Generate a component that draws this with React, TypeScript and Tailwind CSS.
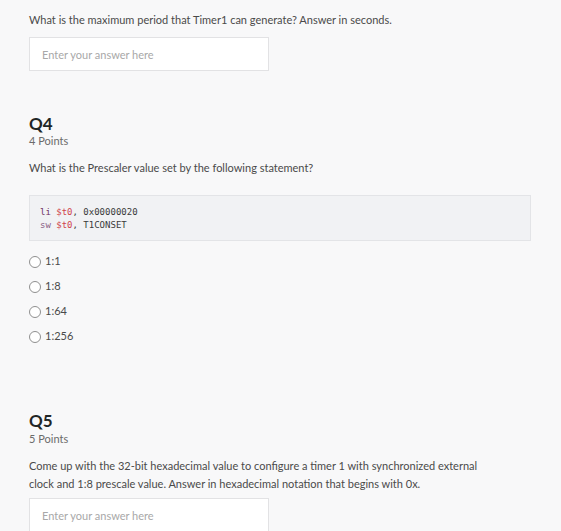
const font = { fontFamily: 'Lato, "Liberation Sans", sans-serif' }

function AnswerInput() {
  return (
    <input
      type="text"
      placeholder="Enter your answer here"
      className="block w-[240px] h-[34px] bg-white border border-[#e2e2e4] px-[12px] text-[11px] text-[#333] placeholder:text-[#a8a8a8] outline-none"
    />
  )
}

function Radio({ label }: { label: string }) {
  return (
    <label className="flex items-center h-[25px] gap-[4px] text-[11px] text-[#4a4a4a]">
      <span className="w-[12px] h-[12px] rounded-full border-[1.5px] border-[#8f8f8f] bg-white" />
      <span>{label}</span>
    </label>
  )
}

export default function App() {
  return (
    <div className="min-h-[531px] bg-[#f8f8f9] pl-[29px] pr-[30px] pt-[11px] pb-10" style={font}>
      <p className="text-[11px] leading-[18px] text-[#4a4a4a]">
        What is the maximum period that Timer1 can generate? Answer in seconds.
      </p>
      <div className="mt-[8px]">
        <AnswerInput />
      </div>

      <h2 className="mt-[44px] text-[17px] leading-[18px] font-bold text-[#1f2626]">Q4</h2>
      <div className="mt-[1px] text-[11px] leading-[14px] text-[#6b6b6b]">4 Points</div>
      <p className="mt-[11px] text-[11px] leading-[18px] text-[#4a4a4a]">
        What is the Prescaler value set by the following statement?
      </p>
      <pre
        className="mt-[18px] bg-[#f1f2f4] border border-[#e3e4e7] pl-[10px] pt-[10px] pb-[8px] text-[9px] leading-[13px] text-[#3a3a3a]"
        style={{ fontFamily: '"DejaVu Sans Mono", "Liberation Mono", monospace' }}
      >
        <span className="text-[#6f2f5f]">li</span> <span className="text-[#d0454c]">$t0</span>, 0x00000020{'\n'}
        <span className="text-[#8a5f86]">sw</span> <span className="text-[#d0454c]">$t0</span>, T1CONSET
      </pre>
      <div className="mt-[8px] flex flex-col">
        <Radio label="1:1" />
        <Radio label="1:8" />
        <Radio label="1:64" />
        <Radio label="1:256" />
      </div>

      <h2 className="mt-[63px] text-[17px] leading-[18px] font-bold text-[#1f2626]">Q5</h2>
      <div className="mt-[2px] text-[11px] leading-[14px] text-[#6b6b6b]">5 Points</div>
      <p className="mt-[11px] text-[11px] leading-[18px] text-[#4a4a4a]">
        Come up with the 32-bit hexadecimal value to configure a timer 1 with synchronized external
        <br />
        clock and 1:8 prescale value. Answer in hexadecimal notation that begins with 0x.
      </p>
      <div className="mt-[5px]">
        <AnswerInput />
      </div>
    </div>
  )
}
